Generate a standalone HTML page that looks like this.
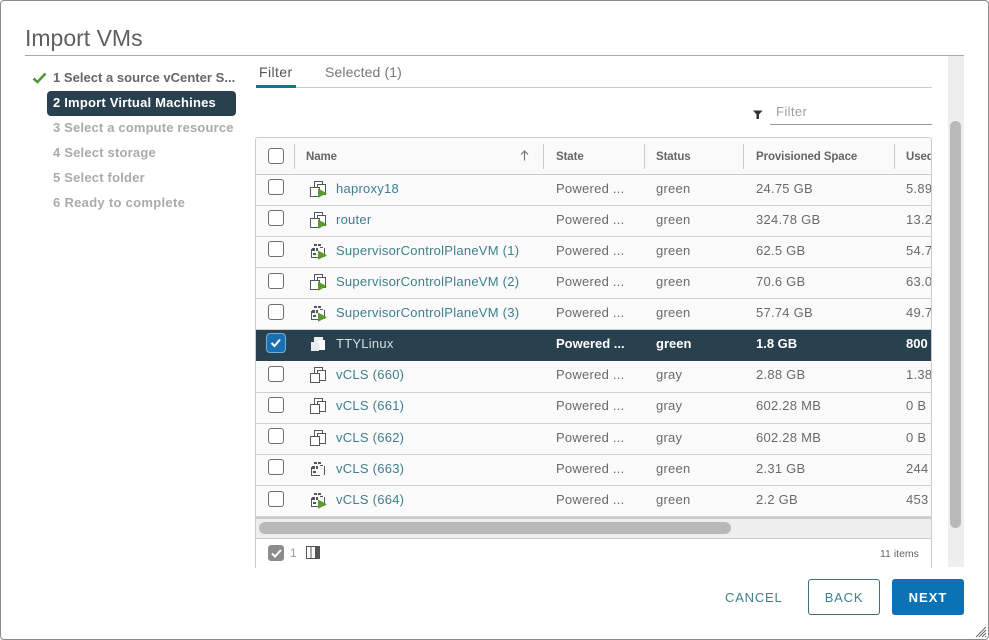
<!DOCTYPE html>
<html>
<head>
<meta charset="utf-8">
<style>
html,body{margin:0;padding:0;background:#fff}
body{width:989px;height:640px;overflow:hidden;position:relative;font-family:"Liberation Sans",sans-serif;color:#666}
.a{position:absolute;white-space:nowrap}
#frame{position:absolute;left:0;top:0;width:987px;height:638px;border:1px solid #8a8a8a;border-radius:4px}
.step{position:absolute;left:53px;font-size:13px;line-height:16px;font-weight:bold;color:#aaa;white-space:nowrap;letter-spacing:.2px}
#table{position:absolute;left:255px;top:137px;width:675px;height:430px;border:1px solid #ccc;border-bottom:0;border-radius:3px 3px 0 0;overflow:hidden;background:#fafafa}
.row{position:absolute;left:0;width:675px;height:30px;border-bottom:1px solid #d0d0d0;background:#fafafa;font-size:13px;color:#6a6a6a}
.row span{position:absolute;top:5px;line-height:18px;white-space:nowrap;letter-spacing:.25px}
.row .n{left:80px;color:#3f7f8c}
.row .s{left:300px}.row .t{left:400px}.row .p{left:500px}.row .u{left:650px}
.row i{position:absolute;left:12px;top:4px;width:14px;height:14px;border:1px solid #6f6f6f;border-radius:3px;background:#fff}
.row svg{position:absolute;left:54px;top:6px}
.up span{top:4px}
.sel{background:#29414e;border-bottom:0;color:#fff;font-weight:bold}
.sel span{letter-spacing:0}
.sel .n{color:#d5dde2;font-weight:normal;letter-spacing:.25px}
.hd{position:absolute;top:12px;font-size:11.5px;line-height:14px;color:#666;font-weight:bold;white-space:nowrap;letter-spacing:-.1px}
.sep{position:absolute;top:6px;width:1px;height:25px;background:#ccc}
</style>
</head>
<body>
<div id="frame"></div>
<svg width="0" height="0" style="position:absolute">
<defs>
<g id="vm" fill="none" stroke="#50585e" stroke-width="1">
<rect x="4.500" y=".5" width="8" height="7" fill="#fff"/>
<rect x="7.500" y="3.500" width="8" height="10" fill="#fff"/>
<rect x=".5" y="6.500" width="9" height="9" fill="#fff"/>
</g>
<g id="play"><path d="M8 7.500L17 12.200L8 16.800Z" fill="#5d9a2c"/></g>
<g id="vmc" fill="#50585e">
<rect x="4" y="1" width="3" height="2"/><rect x="8" y="1" width="3" height="2"/><rect x="2" y="5" width="3" height="3"/><rect x="6" y="5" width="2" height="3"/>
<rect x="10" y="4" width="3" height="1"/><rect x="14" y="5" width="1" height="9"/><rect x="1" y="6" width="1" height="9"/><rect x="1" y="14" width="9" height="1"/><rect x="3" y="10" width="3" height="2"/>
</g>
</defs>
</svg>

<div class="a" style="left:25px;top:24px;font-size:23px;line-height:28px;color:#5f5f5f">Import VMs</div>
<div class="a" style="left:25px;top:55px;width:939px;height:1px;background:#a8a8a8"></div>

<svg class="a" style="left:32px;top:72px" width="15" height="12"><path d="M1.500 6.500L5.500 10L13.500 1.500" fill="none" stroke="#4b9a34" stroke-width="2.600"/></svg>
<div class="step" style="top:70px;color:#666;letter-spacing:.03px">1 Select a source vCenter S...</div>
<div class="a" style="left:47px;top:91px;width:189px;height:25px;background:#29414e;border-radius:4px"></div>
<div class="step" style="top:95px;color:#fff;letter-spacing:.2px">2 Import Virtual Machines</div>
<div class="step" style="top:120px;letter-spacing:.16px">3 Select a compute resource</div>
<div class="step" style="top:145px">4 Select storage</div>
<div class="step" style="top:170px">5 Select folder</div>
<div class="step" style="top:195px;letter-spacing:.3px">6 Ready to complete</div>

<div class="a" style="left:259px;top:63px;font-size:14px;line-height:18px;color:#555;letter-spacing:.4px">Filter</div>
<div class="a" style="left:325px;top:63px;font-size:14px;line-height:18px;color:#777;letter-spacing:.12px">Selected (1)</div>
<div class="a" style="left:256px;top:87px;width:676px;height:1px;background:#ccc"></div>
<div class="a" style="left:256px;top:85px;width:40px;height:3px;background:#1a708f"></div>

<svg class="a" style="left:753px;top:110px" width="10" height="10"><path d="M0 .5H9.500L6 4.500V9H3.500V4.500Z" fill="#333"/></svg>
<div class="a" style="left:776px;top:103px;font-size:13px;line-height:17px;color:#a0a0a0;letter-spacing:.4px">Filter</div>
<div class="a" style="left:770px;top:124px;width:162px;height:1px;background:#999"></div>

<div id="table">
 <div class="a" style="left:0;top:0;width:675px;height:36px;background:#fafafa;border-bottom:1px solid #ccc"></div>
 <div class="a" style="left:12px;top:10px;width:14px;height:14px;border:1px solid #6f6f6f;border-radius:3px;background:#fff"></div>
 <div class="sep" style="left:38px"></div><div class="sep" style="left:287px"></div><div class="sep" style="left:388px"></div><div class="sep" style="left:487px"></div><div class="sep" style="left:638px"></div>
 <div class="hd" style="left:50px">Name</div>
 <svg class="a" style="left:264px;top:12px" width="9" height="11"><path d="M4.500 10.500V1M1 4.500L4.500 1L8 4.500" fill="none" stroke="#777" stroke-width="1.200"/></svg>
 <div class="hd" style="left:300px">State</div>
 <div class="hd" style="left:400px">Status</div>
 <div class="hd" style="left:500px">Provisioned Space</div>
 <div class="hd" style="left:650px">Used</div>

 <div class="row" style="top:37px"><i></i><svg width="18" height="18"><use href="#vm"/><use href="#play"/></svg><span class="n">haproxy18</span><span class="s">Powered ...</span><span class="t">green</span><span class="p">24.75 GB</span><span class="u">5.89</span></div>
 <div class="row" style="top:68px"><i></i><svg width="18" height="18"><use href="#vm"/><use href="#play"/></svg><span class="n">router</span><span class="s">Powered ...</span><span class="t">green</span><span class="p">324.78 GB</span><span class="u">13.26</span></div>
 <div class="row" style="top:99px"><i></i><svg width="18" height="18"><use href="#vmc"/><use href="#play"/></svg><span class="n">SupervisorControlPlaneVM (1)</span><span class="s">Powered ...</span><span class="t">green</span><span class="p">62.5 GB</span><span class="u">54.7</span></div>
 <div class="row" style="top:130px"><i style="top:5px"></i><svg width="18" height="18"><use href="#vm"/><use href="#play"/></svg><span class="n">SupervisorControlPlaneVM (2)</span><span class="s">Powered ...</span><span class="t">green</span><span class="p">70.6 GB</span><span class="u">63.0</span></div>
 <div class="row" style="top:161px"><i style="top:5px"></i><svg width="18" height="18"><use href="#vmc"/><use href="#play"/></svg><span class="n">SupervisorControlPlaneVM (3)</span><span class="s">Powered ...</span><span class="t">green</span><span class="p">57.74 GB</span><span class="u">49.7</span></div>
 <div class="row sel" style="top:192px;height:31px">
  <div class="a" style="left:10px;top:3px;width:18px;height:18px;background:#1a6fb0;border:1px solid #6fb1dc;border-radius:4px"></div>
  <svg style="left:14px;top:8px" width="12" height="10"><path d="M1.500 5L4.500 8L10 1.500" fill="none" stroke="#fff" stroke-width="2"/></svg>
  <svg width="18" height="18"><rect x="4" y="1" width="9" height="7" fill="#e8ecee"/><rect x="8" y="4" width="7" height="10" fill="#fff"/><rect x="1" y="6" width="8" height="9" fill="#e8ecee"/></svg>
  <span class="n">TTYLinux</span><span class="s">Powered ...</span><span class="t">green</span><span class="p">1.8 GB</span><span class="u">800</span></div>
 <div class="row up" style="top:224px"><i></i><svg style="top:5px" width="18" height="18"><use href="#vm"/></svg><span class="n">vCLS (660)</span><span class="s">Powered ...</span><span class="t">gray</span><span class="p">2.88 GB</span><span class="u">1.38</span></div>
 <div class="row up" style="top:255px"><i></i><svg style="top:5px" width="18" height="18"><use href="#vm"/></svg><span class="n">vCLS (661)</span><span class="s">Powered ...</span><span class="t">gray</span><span class="p">602.28 MB</span><span class="u">0 B</span></div>
 <div class="row" style="top:286px"><i></i><svg width="18" height="18"><use href="#vm"/></svg><span class="n">vCLS (662)</span><span class="s">Powered ...</span><span class="t">gray</span><span class="p">602.28 MB</span><span class="u">0 B</span></div>
 <div class="row" style="top:317px"><i></i><svg width="18" height="18"><use href="#vmc"/></svg><span class="n">vCLS (663)</span><span class="s">Powered ...</span><span class="t">green</span><span class="p">2.31 GB</span><span class="u">244</span></div>
 <div class="row" style="top:348px"><i style="top:5px"></i><svg width="18" height="18"><use href="#vmc"/><use href="#play"/></svg><span class="n">vCLS (664)</span><span class="s">Powered ...</span><span class="t">green</span><span class="p">2.2 GB</span><span class="u">453</span></div>

 <div class="a" style="left:0;top:379px;width:675px;background:#eee;border-top:2px solid #ccc;border-bottom:1px solid #ccc;box-sizing:border-box;height:22px"></div>
 <div class="a" style="left:3px;top:384px;width:472px;height:12px;background:#b9b9b9;border-radius:6px"></div>
 <div class="a" style="left:0;top:401px;width:675px;height:29px;background:#fff"></div>
 <div class="a" style="left:12px;top:407px;width:16px;height:16px;background:#8c8c8c;border-radius:3px"></div>
 <svg class="a" style="left:15px;top:411px" width="11" height="9"><path d="M1 4.500L4 7.500L10 1" fill="none" stroke="#fff" stroke-width="2"/></svg>
 <div class="a" style="left:34px;top:408px;font-size:12px;line-height:14px;color:#999">1</div>
 <svg class="a" style="left:50px;top:408px" width="15" height="13"><rect x=".5" y=".5" width="13" height="12" fill="#fff" stroke="#555"/><rect x="9" y="0" width="5" height="13" fill="#555"/><path d="M5 0V13" stroke="#555"/></svg>
 <div class="a" style="left:624px;top:409px;font-size:10.500px;line-height:14px;color:#666">11 items</div>
</div>

<div class="a" style="left:948px;top:56px;width:16px;height:511px;background:#eee"></div>
<div class="a" style="left:950px;top:121px;width:11px;height:407px;background:#b9b9b9;border-radius:6px"></div>

<div class="a" style="left:725px;top:590px;font-size:13px;line-height:16px;color:#3f7f8c;letter-spacing:.8px">CANCEL</div>
<div class="a" style="left:808px;top:579px;width:70px;height:34px;border:1px solid #3f6f7c;border-radius:3px;text-align:center;font-size:13px;line-height:36px;color:#3f7f8c;letter-spacing:.8px">BACK</div>
<div class="a" style="left:892px;top:579px;width:72px;height:36px;background:#0a72b5;border-radius:3px;text-align:center;font-size:13px;font-weight:bold;line-height:37px;color:#fff;letter-spacing:1px">NEXT</div>
<svg class="a" style="left:975px;top:626px" width="12" height="12"><path d="M1 11L11 1M4 11L11 4M7 11L11 7M10 11L11 10" stroke="#666" stroke-width="1"/></svg>
</body>
</html>
